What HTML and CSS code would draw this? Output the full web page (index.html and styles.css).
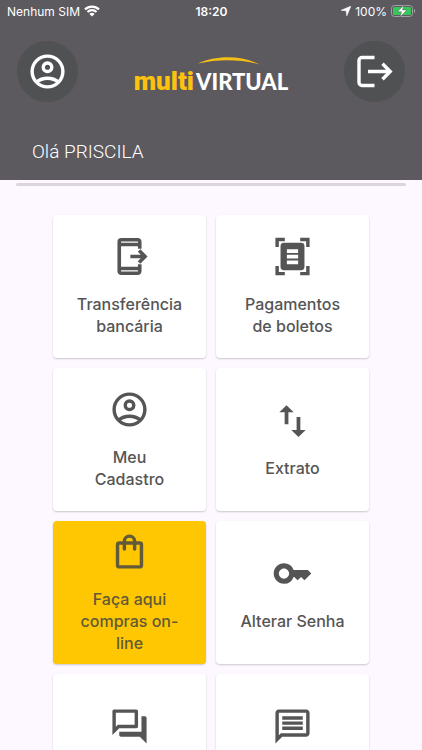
FILE: index.html
```html
<!doctype html>
<html lang="pt-BR">
  <head>
    <meta charset="UTF-8" />
    <meta name="viewport" content="width=device-width, initial-scale=1" />
    <title>Multi Virtual</title>
    <link rel="stylesheet" href="styles.css">
  </head>
  <body>
    <header class="header">
      <div class="status-bar">
        <div class="status-left">
          <span>Nenhum SIM</span>
          <svg class="wifi" viewBox="0 0 16 12" aria-hidden="true">
            <path d="M1 4.400a10 10 0 0 1 14 0M3.500 7a6.400 6.400 0 0 1 9 0" fill="none" stroke="currentColor" stroke-width="2.200" />
            <path d="M8 11.600 5.400 9a3.700 3.700 0 0 1 5.200 0z" fill="currentColor" />
          </svg>
        </div>
        <div class="status-time">18:20</div>
        <div class="status-right">
          <svg class="location" viewBox="0 0 10 10" aria-hidden="true">
            <path d="M9.800.2 5.800 9.800 5.200 4.800.2 4.300z" fill="currentColor" stroke="currentColor" stroke-width=".6" />
          </svg>
          <span>100%</span>
          <svg class="battery" viewBox="0 0 25 12" aria-hidden="true">
            <rect x=".5" y=".5" width="21" height="11" rx="3" fill="none" stroke="#a3a1a5" />
            <rect x="2" y="2" width="18" height="8" rx="1.500" fill="#35c759" />
            <path d="M23 4c1.600.5 1.600 3.500 0 4z" fill="#a3a1a5" />
            <path d="M13 0 6.500 6.800h4L9 12l6.800-7h-4.200z" fill="#fff" stroke="#5c595f" stroke-width=".5" />
          </svg>
        </div>
      </div>
      <div class="toolbar">
        <button class="round-button" type="button" aria-label="Meu perfil">
          <svg class="icon" viewBox="0 0 24 24"><use href="#account" /></svg>
        </button>
        <div class="logo">
          <svg class="logo-arc" viewBox="0 0 62 8" aria-hidden="true">
            <path d="M0 6.500C18-2 43-2 62 7.500 41 1.800 20 2 0 6.500z" fill="#f5bf17" />
          </svg>
          <span class="logo-multi">multi</span><span class="logo-virtual">VIRTUAL</span>
        </div>
        <button class="round-button" type="button" aria-label="Sair">
          <svg class="icon" viewBox="0 0 41 41">
            <path d="M20.500 6.500H8a3 3 0 0 0-3 3v22a3 3 0 0 0 3 3h12.500M14 20.500h22M28.500 12.800l7.700 7.700-7.700 7.700" fill="none" stroke="currentColor" stroke-width="3.400" />
          </svg>
        </button>
      </div>
      <p class="greeting">Olá PRISCILA</p>
    </header>

    <main>
      <hr class="divider" />
      <nav class="menu">
        <a class="card" href="#transferencia">
          <svg class="icon" viewBox="0 0 24 24">
            <path d="M18 7.500V3.400a1.200 1.200 0 0 0-1.200-1.200H7.200A1.200 1.200 0 0 0 6 3.400v17.200a1.200 1.200 0 0 0 1.200 1.200h9.600a1.200 1.200 0 0 0 1.200-1.200V16.500" fill="none" stroke="currentColor" stroke-width="2.100" />
            <path d="M6 5h12M6 19h12" fill="none" stroke="currentColor" stroke-width="2" />
            <path d="M12.500 12h8.500M17.600 8.500l3.500 3.500-3.500 3.500" fill="none" stroke="currentColor" stroke-width="2.100" />
          </svg>
          <span>Transferência bancária</span>
        </a>
        <a class="card" href="#boletos">
          <svg class="icon" viewBox="0 0 24 24">
            <path d="M3 6.500V2h4.500M16.500 2H21v4.500M21 17.500V22h-4.500M7.500 22H3v-4.500" fill="none" stroke="currentColor" stroke-width="2" />
            <path fill-rule="evenodd" d="M7 4h10a2 2 0 0 1 2 2v12a2 2 0 0 1-2 2H7a2 2 0 0 1-2-2V6a2 2 0 0 1 2-2zM8.700 7.700v2.200h6.600V7.700zM8.700 11v2.200h6.600V11zM8.700 14.300v2.200h6.600v-2.200z" fill="currentColor" />
          </svg>
          <span>Pagamentos de boletos</span>
        </a>
        <a class="card" href="#cadastro">
          <svg class="icon" viewBox="0 0 24 24"><use href="#account" /></svg>
          <span>Meu<br />Cadastro</span>
        </a>
        <a class="card" href="#extrato">
          <svg class="icon" viewBox="0 0 24 24">
            <path d="M16.600 17.500V10h-2.200v7.500h-3.100l4.200 4.200 4.200-4.200zM8.500 3 4.300 7.200h3.100v7h2.200v-7h3.100z" fill="currentColor" />
          </svg>
          <span>Extrato</span>
        </a>
        <a class="card card-highlight" href="#compras">
          <svg class="icon" viewBox="0 0 24 24">
            <path d="M6 7h12a1 1 0 0 1 1 1v12a1 1 0 0 1-1 1H6a1 1 0 0 1-1-1V8a1 1 0 0 1 1-1z" fill="none" stroke="currentColor" stroke-width="2" />
            <path d="M9 10.500V6a3 3 0 0 1 6 0v4.500" fill="none" stroke="currentColor" stroke-width="2" stroke-linecap="round" />
          </svg>
          <span>Faça aqui compras on-line</span>
        </a>
        <a class="card" href="#senha">
          <svg class="icon" viewBox="0 0 24 24">
            <path fill-rule="evenodd" d="M21 10h-8.350A5.990 5.990 0 0 0 7 6c-3.310 0-6 2.690-6 6s2.690 6 6 6a5.990 5.990 0 0 0 5.650-4H13l2 2 2-2 2 2 4-4.040zM7 15c-1.650 0-3-1.350-3-3s1.350-3 3-3 3 1.350 3 3-1.350 3-3 3z" fill="currentColor" />
          </svg>
          <span>Alterar Senha</span>
        </a>
        <a class="card" href="#chat">
          <svg class="icon" viewBox="0 0 24 24">
            <path d="M15 4v7H5.170L4 12.170V4h11m1-2H3c-.55 0-1 .45-1 1v14l4-4h10c.55 0 1-.45 1-1V3c0-.55-.45-1-1-1zm5 4h-2v9H6v2c0 .55.45 1 1 1h11l4 4V7c0-.55-.45-1-1-1z" fill="currentColor" />
          </svg>
          <span>Chat</span>
        </a>
        <a class="card" href="#mensagens">
          <svg class="icon" viewBox="0 0 24 24">
            <path d="M4 4h16v12H5.170L4 17.170V4m0-2c-1.100 0-1.990.9-1.990 2L2 22l4-4h14c1.100 0 2-.9 2-2V4c0-1.100-.9-2-2-2H4zm2 10h12v2H6v-2zm0-3h12v2H6V9zm0-3h12v2H6V6z" fill="currentColor" />
          </svg>
          <span>Mensagens</span>
        </a>
      </nav>
    </main>

    <svg class="symbols" aria-hidden="true">
      <symbol id="account" viewBox="0 0 24 24">
        <g fill="none" stroke="currentColor" stroke-width="2">
          <circle cx="12" cy="12" r="9" />
          <circle cx="12" cy="9.500" r="2.500" />
          <path d="M5.500 18.300c3.600-3.100 9.400-3.100 13 0" />
        </g>
      </symbol>
    </svg>
  </body>
</html>
```

FILE: styles.css
```css
* {
  box-sizing: border-box;
}
body {
  margin: 0;
  background: #fdf7ff;
  color: #555;
  font-family: Inter, "Liberation Sans", sans-serif;
  -webkit-font-smoothing: antialiased;
}
.header {
  background: #5c595f;
  color: #fff;
  padding-bottom: 16px;
}
.status-bar {
  display: grid;
  grid-template-columns: 1fr auto 1fr;
  align-items: center;
  height: 22px;
  padding: 0 6px 0 7px;
  font-size: 12px;
}
.status-left,
.status-right {
  display: flex;
  align-items: center;
  gap: 4px;
}
.status-right {
  justify-content: flex-end;
}
.status-time {
  font-weight: 600;
}
.wifi {
  width: 16px;
  height: 12px;
}
.location {
  width: 10px;
  height: 10px;
}
.battery {
  width: 25px;
  height: 12px;
}
.toolbar {
  display: flex;
  align-items: center;
  justify-content: space-between;
  padding: 19px 17px 0;
}
.round-button {
  display: flex;
  align-items: center;
  justify-content: center;
  width: 61px;
  height: 61px;
  padding: 0;
  border: none;
  border-radius: 50%;
  background: #505153;
  color: #fff;
  cursor: pointer;
}
.icon {
  display: block;
  flex-shrink: 0;
  width: 41px;
  height: 41px;
}
.logo {
  position: relative;
  display: flex;
  align-items: baseline;
  gap: 2px;
  margin-top: 11px;
  padding-top: 8px;
  font-weight: 900;
  line-height: 32px;
}
.logo-arc {
  position: absolute;
  top: 0;
  right: 28px;
  width: 62px;
  height: 8px;
}
.logo-multi {
  color: #fdc20f;
  font-family: Roboto, sans-serif;
  font-size: 26px;
}
.logo-virtual {
  font-family: Lato, sans-serif;
  font-size: 22px;
}
.greeting {
  margin: 0;
  padding: 38px 32px 0;
  font-family: Roboto, sans-serif;
  font-size: 19px;
  font-weight: 300;
  line-height: 24px;
}
.divider {
  height: 3px;
  margin: 3px 16px 0;
  border: none;
  border-radius: 2px;
  background: #ddd5de;
}
.menu {
  display: grid;
  grid-template-columns: 1fr 1fr;
  gap: 10px;
  padding: 29px 53px;
}
.card {
  display: flex;
  flex-direction: column;
  align-items: center;
  justify-content: center;
  gap: 16px;
  min-height: 143px;
  padding: 0 20px;
  border-radius: 4px;
  background: #fff;
  box-shadow: 0 1px 2px rgba(0, 0, 0, 0.2);
  color: #555;
  font-size: 16px;
  font-weight: 500;
  line-height: 22px;
  text-align: center;
  text-decoration: none;
}
.card-highlight {
  background: #ffc602;
  color: #625a38;
}
.symbols {
  display: none;
}
```
